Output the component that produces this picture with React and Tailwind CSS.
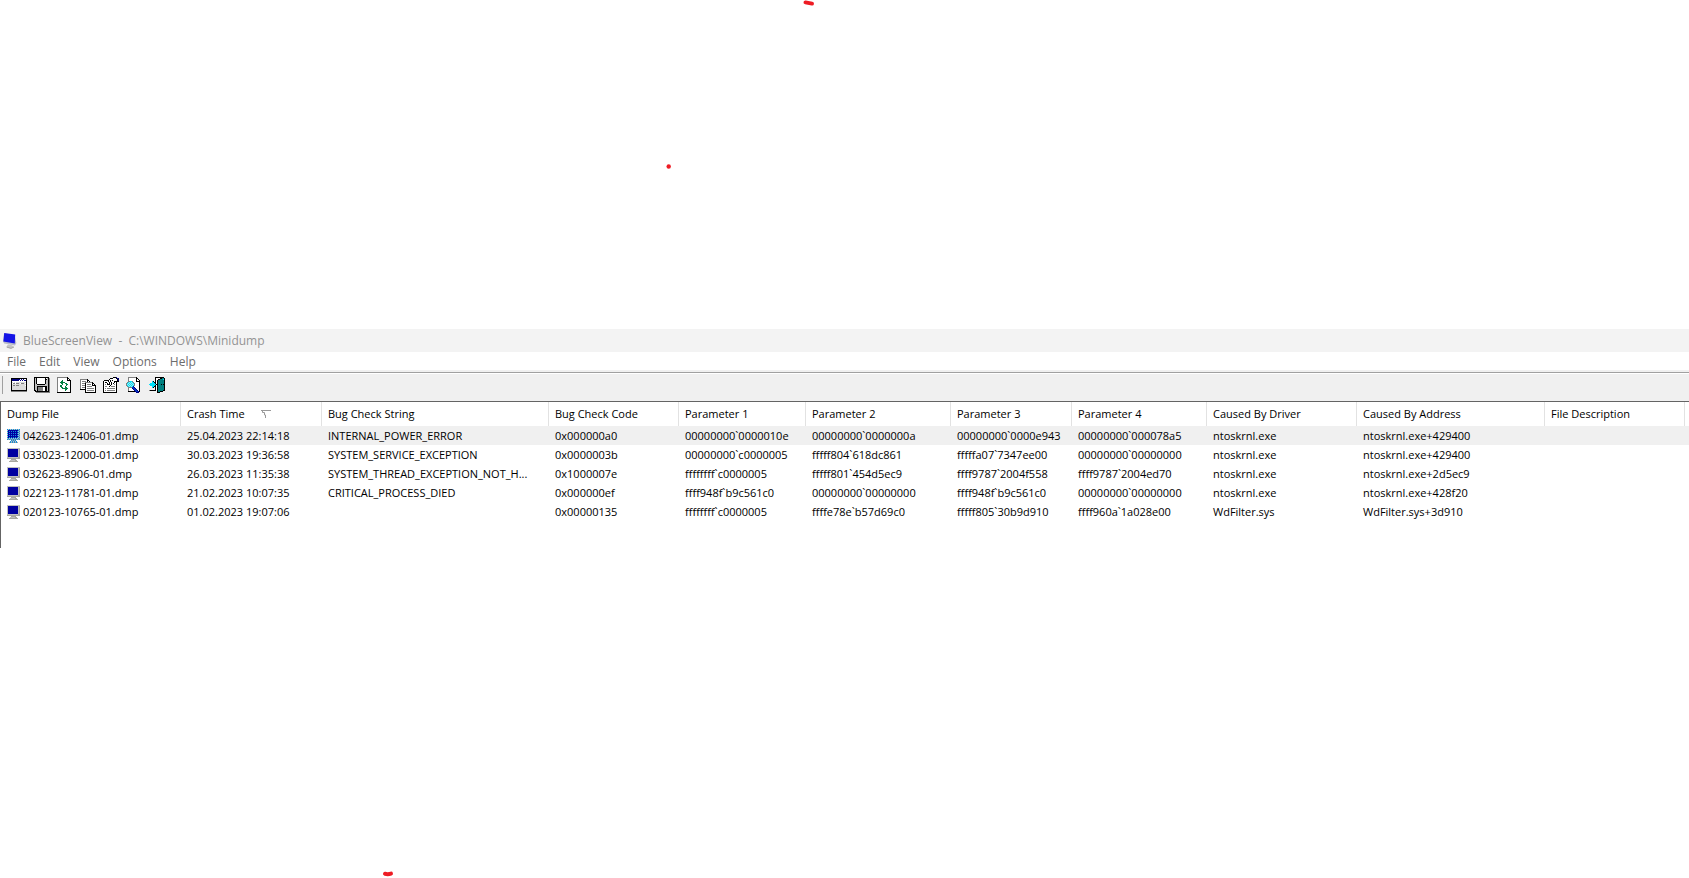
import React from 'react';

const palette = {
  k: '#000000', w: '#ffffff', g: '#808080', l: '#c0c0c0', n: '#000080',
  e: '#008040', t: '#008080', c: '#00e0f8', b: '#0030c0', s: '#303030',
  a: '#a0e8f0', d: '#dcdcdc', v: '#0000a0', q: '#1090e0', m: '#a8a8a0',
};

const icons = {
  props: [
    'kkkkkkkkkkkkkkkk',
    'knnnnnnnnwnwnwwk',
    'knnnnnnnwnwnwnnk',
    'kwwwwwwwwwwwwwwk',
    'kdwdwddddddddddk',
    'kwggwgggdwgggdwk',
    'kddddddddddddddk',
    'kdggdgggddddddwk',
    'kddddddddddddddk',
    'kddddddddddddddk',
    'kddddddddddddddk',
    'kddddddddddddddk',
    'kkkkkkkkkkkkkkkk',
    'gggggggggggggggg',
  ],
  save: [
    'kkkkkkkkkkkkkkk.',
    'klkwwwwwwwwkwlkg',
    'klkwwwwwwwwkklkg',
    'klkwwwwwwwwkllkg',
    'klkwwwwwwwwkllkg',
    'klkwwwwwwwwkllkg',
    'klkwwwwwwwwkllkg',
    'kllkkkkkkkklllkg',
    'klllllllllllllkg',
    'kllkkkkkkkkkklkg',
    'kllkgggggwwkklkg',
    'kllkgggggwwkklkg',
    'kllkgggggwwkklkg',
    'kklkgggggwwkklkg',
    '.kkkkkkkkkkkkkkg',
    '..gggggggggggggg',
  ],
  refresh: [
    'ggggggggggk...',
    'gwwwwwwwwwkk..',
    'gwwwwwwwwwkwk.',
    'gwwwwewwwwkkkk',
    'gwwweewwwwwwwk',
    'gwweeeeewwwwwk',
    'gwwweewweewwwk',
    'gwwwwewwweewwk',
    'gwweewwwwewwwk',
    'gwweewwwewwwwk',
    'gwwweewweewwwk',
    'gwwwweeeeeewwk',
    'gwwwwwwweewwwk',
    'gwwwwwwwewwwwk',
    'gwwwwwwwwwwwwk',
    'kkkkkkkkkkkkkk',
  ],
  copy: [
    '................',
    '................',
    'gggggggk........',
    'gwwwwwwkk.......',
    'gwggggwkwk......',
    'gwwwwgggggggk...',
    'gwgggkwwwwwwkk..',
    'gwwwwkwggggwkwk.',
    'gwgggkwwwwwwkkkk',
    'gwwwwkwgggggwwwk',
    'gwgggkwwwwwwwwwk',
    'gwwwwkwgggggggwk',
    'kkkkkkwwwwwwwwwk',
    '.....kwgggggggwk',
    '.....kwwwwwwwwwk',
    '.....kkkkkkkkkkk',
  ],
  options: [
    '..........kkkn..',
    '.......kkkwwwknn',
    '......kwwwwwwwkn',
    '.kkkkkwkwkwwwwkn',
    'kwwwwkwkwwwkkkkk',
    'kwkkwwkwkwwkwk..',
    'kwwwkwkwkwkwwk..',
    'kwgwkkkwkwwgwk..',
    'kwwwwwwkwwwwwk..',
    'kwggwwkwggggwk..',
    'kwwwwwwwwwwwwk..',
    'kwgwggggggggwk..',
    'kwwwwwwwwwwwwk..',
    'kwgwggggggggwk..',
    'kwwwwwwwwwwwwk..',
    'kkkkkkkkkkkkkk..',
  ],
  find: [
    '..ggggggggk.....',
    '..gwwwwwwwkk....',
    '..gwwwwwwwkwk...',
    '..gwwwwwwwkwwk..',
    '..ggccgwwwkkkk..',
    '.gcacacgwwwwwk..',
    'gcacacacgwwwwk..',
    'gacacacagwwwwk..',
    'gcacacacgwwwwk..',
    '.gcacacnwwwwwk..',
    '..ggggbbnwwwwk..',
    '..gwwwnbbnwwwk..',
    '..gwwwwnbbnwwk..',
    '..gwwwwwnbbnwk..',
    '..kkkkkkknbbnk..',
    '..........nnn...',
  ],
  exit: [
    '......kkkkkkkkk.',
    '......kwwwwkkttk',
    '......kwwkktttck',
    '......kwkttttttk',
    '...ck.kwkttttttk',
    '...cckkwkttttttk',
    '.ccccckwkttttttk',
    'ccccccckktttktkk',
    '.ccccckwkttttttk',
    '...cckkwkttttttk',
    '...ck.kwkttttttk',
    '......kwkttttttk',
    '......kwkttttttk',
    'gkkkkkkwktttttkk',
    '........kttkkk..',
    '........kkk.....',
  ],
  monitor: [
    'lllllllllllll',
    'lvvvvvvvvvvlm',
    'lvvvvvvvvvvlm',
    'lvvvvvvvvvvlm',
    'lvvvvvvvvvvlm',
    'lvvvvvvvvvvlm',
    'lvvvvvvvvvvlm',
    'lvvvvvvvvvvlm',
    'lvvvvvvvvvvlm',
    'lllllllllllmm',
    'mmmmmmmmmmmmm',
    '....mmmmm....',
    '...lllllmm...',
    '..mmmmmmmmm..',
  ],
  monitorSelected: [
    'qlqlqlqlqlqlq',
    'lvvvvvvvvvvqm',
    'qvqvqvqvqvqlq',
    'lvvvvvvvvvvqm',
    'qvqvqvqvqvqlq',
    'lvvvvvvvvvvqm',
    'qvqvqvqvqvqlq',
    'lvvvvvvvvvvqm',
    'qvqvqvqvqvqlq',
    'lqlqlqlqlqlqm',
    'qmqmqmqmqmqmq',
    '....qmqmq....',
    '...qlqlqlq...',
    '..mqmqmqmqm..',
  ],
};

function PixelIcon({ name }) {
  const rows = icons[name];
  const width = rows[0].length;
  const cells = [];
  rows.forEach((row, y) => {
    let x = 0;
    while (x < row.length) {
      let end = x + 1;
      while (end < row.length && row[end] === row[x]) end++;
      if (row[x] !== '.') {
        cells.push(<rect key={`${x}-${y}`} x={x} y={y} width={end - x} height="1" fill={palette[row[x]]} />);
      }
      x = end;
    }
  });
  return (
    <svg width={width} height={rows.length} viewBox={`0 0 ${width} ${rows.length}`} shapeRendering="crispEdges" className="block shrink-0" aria-hidden="true">
      {cells}
    </svg>
  );
}

function AppIcon() {
  return (
    <svg width="14" height="16" viewBox="0 0 14 16" className="block shrink-0" aria-hidden="true">
      <path d="M1 0.5 11.5 2 13.4 10 12 12.5 1.2 10.5 0 8.5Z" fill="#b9bcc8" />
      <path d="M1.2 0 12.2 1.4 11.8 10.4 0.4 8.4Z" fill="#1414e6" />
      <path d="M5 11.5 9 12.2 11 14 8 15.6 3 14.2Z" fill="#c4c4c4" />
      <path d="M4 14.2 8 15.4 11 14" fill="none" stroke="#999" strokeWidth="0.8" />
    </svg>
  );
}

const menus = ['File', 'Edit', 'View', 'Options', 'Help'];

const tools = [
  ['props', 'Advanced options'],
  ['save', 'Save selected items'],
  ['refresh', 'Refresh'],
  ['copy', 'Copy selected items'],
  ['options', 'Properties'],
  ['find', 'Find'],
  ['exit', 'Exit'],
];

const columns = [
  'Dump File', 'Crash Time', 'Bug Check String', 'Bug Check Code', 'Parameter 1', 'Parameter 2',
  'Parameter 3', 'Parameter 4', 'Caused By Driver', 'Caused By Address', 'File Description',
];

const crashes = [
  ['042623-12406-01.dmp', '25.04.2023 22:14:18', 'INTERNAL_POWER_ERROR', '0x000000a0', '00000000`0000010e', '00000000`0000000a', '00000000`0000e943', '00000000`000078a5', 'ntoskrnl.exe', 'ntoskrnl.exe+429400', ''],
  ['033023-12000-01.dmp', '30.03.2023 19:36:58', 'SYSTEM_SERVICE_EXCEPTION', '0x0000003b', '00000000`c0000005', 'fffff804`618dc861', 'fffffa07`7347ee00', '00000000`00000000', 'ntoskrnl.exe', 'ntoskrnl.exe+429400', ''],
  ['032623-8906-01.dmp', '26.03.2023 11:35:38', 'SYSTEM_THREAD_EXCEPTION_NOT_H...', '0x1000007e', 'ffffffff`c0000005', 'fffff801`454d5ec9', 'ffff9787`2004f558', 'ffff9787`2004ed70', 'ntoskrnl.exe', 'ntoskrnl.exe+2d5ec9', ''],
  ['022123-11781-01.dmp', '21.02.2023 10:07:35', 'CRITICAL_PROCESS_DIED', '0x000000ef', 'ffff948f`b9c561c0', '00000000`00000000', 'ffff948f`b9c561c0', '00000000`00000000', 'ntoskrnl.exe', 'ntoskrnl.exe+428f20', ''],
  ['020123-10765-01.dmp', '01.02.2023 19:07:06', '', '0x00000135', 'ffffffff`c0000005', 'ffffe78e`b57d69c0', 'fffff805`30b9d910', 'ffff960a`1a028e00', 'WdFilter.sys', 'WdFilter.sys+3d910', ''],
];

function CrashTable() {
  return (
    <table className="w-full table-fixed border-collapse text-left">
      <colgroup>
        <col className="w-[180px]" />
        <col className="w-[141px]" />
        <col className="w-[227px]" />
        <col className="w-[130px]" />
        <col className="w-[127px]" />
        <col className="w-[145px]" />
        <col className="w-[121px]" />
        <col className="w-[135px]" />
        <col className="w-[150px]" />
        <col className="w-[188px]" />
        <col className="w-[140px]" />
        <col />
      </colgroup>
      <thead>
        <tr className="h-6">
          {columns.map((column) => (
            <th key={column} scope="col" className="whitespace-nowrap p-0 font-normal">
              <div className="flex h-6 items-center gap-4 border-r border-[#e2e2e2] pl-1.5">
                {column}
                {column === 'Crash Time' && (
                  <svg width="10" height="8" viewBox="0 0 10 8" className="block" aria-hidden="true">
                    <path d="M0 0.5H10M1.5 1V2.5H3.5V5H4.5V8" fill="none" stroke="#9a9a9a" />
                  </svg>
                )}
              </div>
            </th>
          ))}
          <th aria-hidden="true" />
        </tr>
      </thead>
      <tbody>
        {crashes.map((crash, row) => {
          const tone = row === 0 ? 'bg-[#f0f0f0]' : '';
          return (
            <tr key={crash[0]} className="h-[19px]">
              {crash.map((value, i) =>
                i === 0 ? (
                  <td key={i} className="p-0">
                    <div className="flex h-[19px] items-center pl-1.5">
                      <PixelIcon name={row === 0 ? 'monitorSelected' : 'monitor'} />
                      <span className={`flex h-[19px] grow items-center whitespace-nowrap pl-[3px] ${tone}`}>{value}</span>
                    </div>
                  </td>
                ) : (
                  <td key={i} className={`whitespace-nowrap py-0 pl-1.5 pr-0 ${tone}`}>{value}</td>
                ),
              )}
              <td className={tone} />
            </tr>
          );
        })}
      </tbody>
    </table>
  );
}

export default function App() {
  return (
    <div className="relative min-h-screen overflow-hidden bg-white pt-[329px] font-['Open_Sans','Noto_Sans',sans-serif] text-[11px] leading-4 text-black">
      <svg className="absolute left-[803px] top-0" width="12" height="6" viewBox="0 0 12 6" aria-hidden="true">
        <path d="M2.5 2.4 9 3.6" stroke="#ee1c24" strokeWidth="4" strokeLinecap="round" />
      </svg>
      <svg className="absolute left-[666px] top-[164px]" width="5" height="5" viewBox="0 0 5 5" aria-hidden="true">
        <circle cx="2.7" cy="2.5" r="2.2" fill="#ee1c24" />
      </svg>
      <svg className="absolute left-[382px] top-[871px]" width="12" height="6" viewBox="0 0 12 6" aria-hidden="true">
        <path d="M3 2.8Q6 3.6 9 2.6" fill="none" stroke="#ee1c24" strokeWidth="4" strokeLinecap="round" />
      </svg>
      <main>
        <header className="flex h-[23px] items-center gap-1.5 bg-[#f3f3f3] pl-[3px] text-[#949494]">
          <AppIcon />
          <h1 className="whitespace-pre text-xs">BlueScreenView  -  C:\WINDOWS\Minidump</h1>
        </header>
        <nav className="flex h-[18px] items-end gap-[13px] pl-[7px] text-xs text-[#6d6d6d]">
          {menus.map((menu) => (
            <button key={menu} type="button">{menu}</button>
          ))}
        </nav>
        <div className="h-[3px] border-b border-[#a0a0a0] bg-[#f0f0f0]" />
        <div role="toolbar" aria-label="Main" className="flex h-7 items-center gap-[7px] border-t border-white bg-[#f0f0f0] pb-1.5 pl-0.5">
          <div className="mr-px h-[18px] w-px bg-[#a0a0a0]" />
          {tools.map(([icon, label]) => (
            <button key={icon} type="button" aria-label={label} className="flex size-4 items-center">
              <PixelIcon name={icon} />
            </button>
          ))}
        </div>
        <section aria-label="Crash dumps" className="min-h-[147px] border-l border-t border-[#646464]">
          <CrashTable />
        </section>
      </main>
    </div>
  );
}
